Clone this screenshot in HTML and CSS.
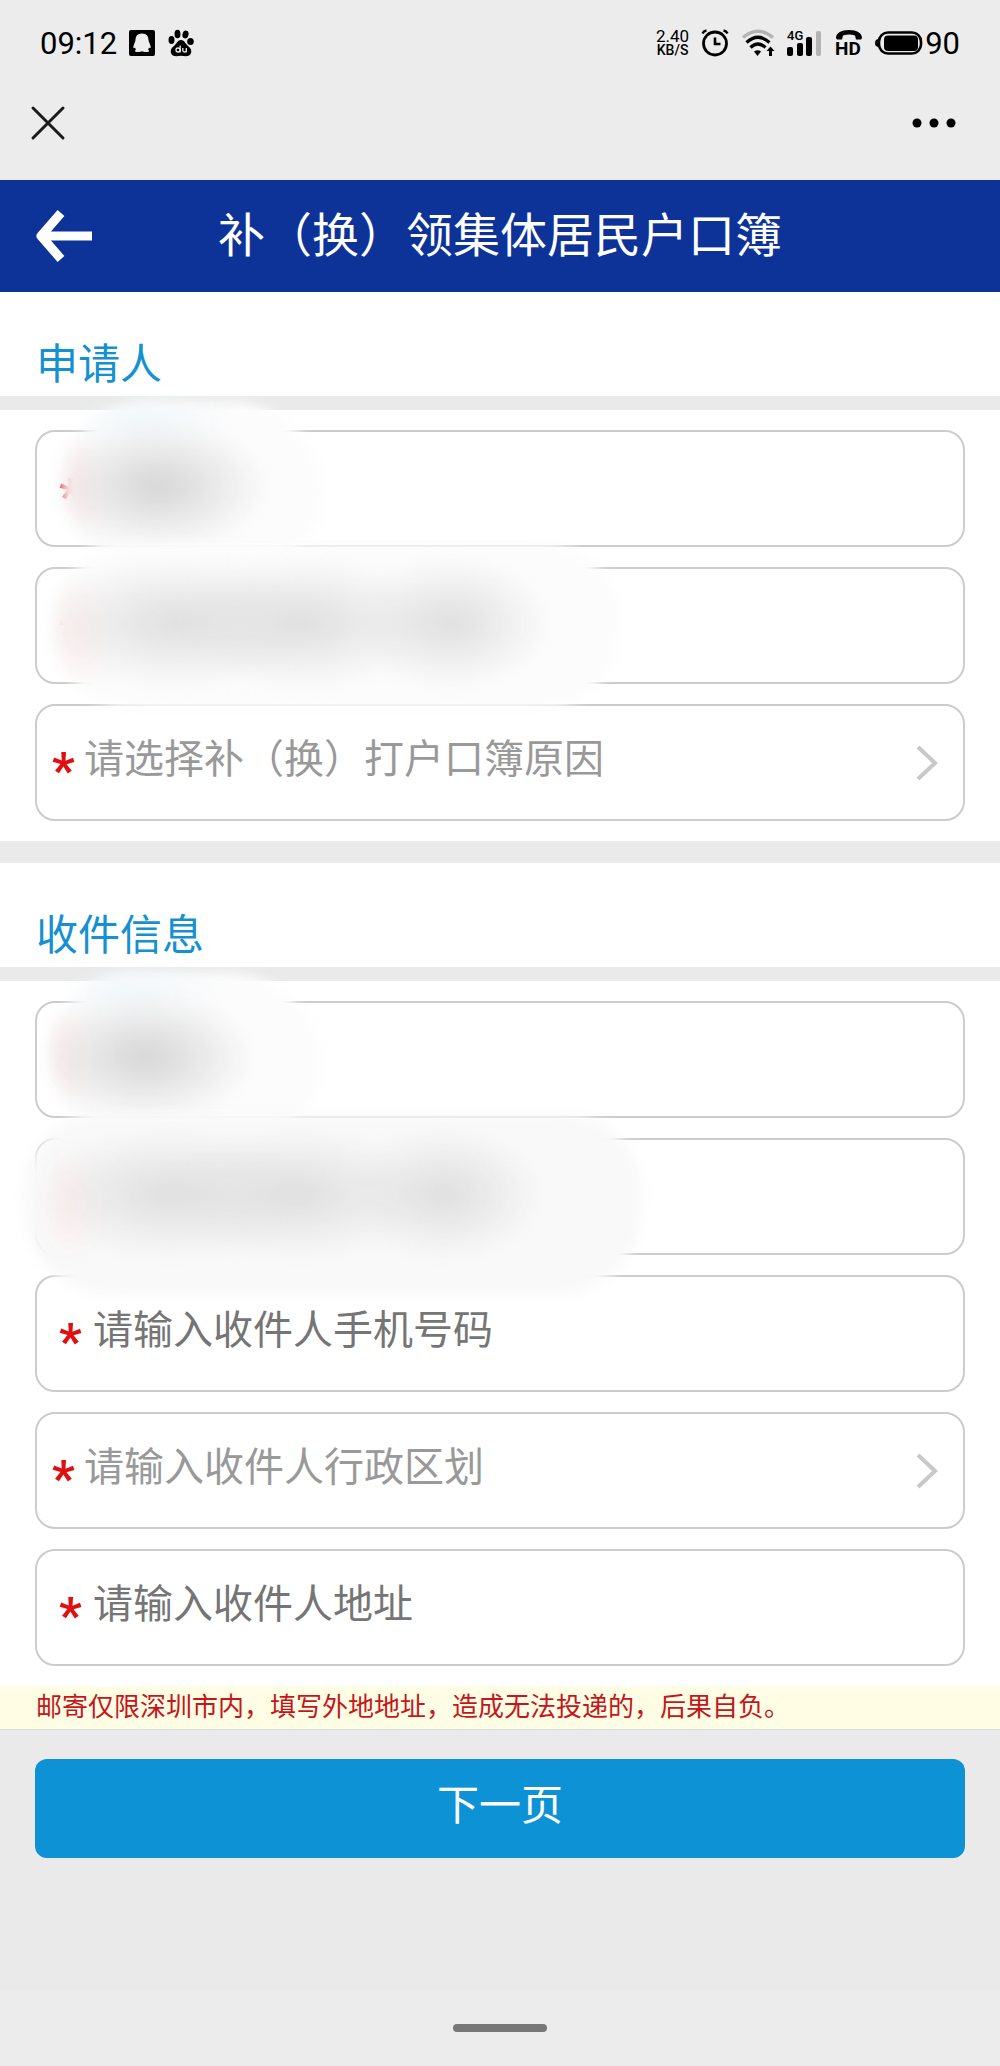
FILE: index.html
```html
<!DOCTYPE html>
<html lang="zh-CN">
<head>
  <meta charset="UTF-8">
  <meta name="viewport" content="width=device-width, initial-scale=1">
  <title>补（换）领集体居民户口簿</title>
  <link rel="stylesheet" href="styles.css">
</head>
<body>
  <div class="status-bar">
    <div class="status-left">
      <span class="status-time">09:12</span>
      <svg class="icon-qq" width="26" height="26" viewBox="0 0 26 26">
        <rect width="26" height="26" rx="2" fill="#000"/>
        <path d="M13 3.500c-4.500 0-6.500 2.800-6.500 6.500 0 2-2 4.500-2.200 7-.1 1.300.8 1.600 1.700.6l.8 1.900-1 1.800c0 1 5.700 1 7.200 0 1.500 1 7.200 1 7.200 0l-1-1.800.8-1.900c.9 1 1.800.7 1.700-.6C21.500 14.500 19.500 12 19.500 10c0-3.700-2-6.500-6.500-6.500z" fill="#eee"/>
      </svg>
      <svg class="icon-paw" width="28" height="28" viewBox="0 0 28 28">
        <ellipse cx="4.500" cy="11" rx="3" ry="4"/>
        <ellipse cx="10.500" cy="5" rx="3" ry="4.300"/>
        <ellipse cx="18.500" cy="5.500" rx="3" ry="4" transform="rotate(15 18.500 5.500)"/>
        <ellipse cx="23.500" cy="12.500" rx="3.300" ry="3.500"/>
        <path d="M14 11c3 0 4 3 6.500 5.500 3 2.500 4.500 4.500 3.500 7.500-1 3.500-4.500 3.500-10 2.800-5.500.7-9 .7-10-2.800-1-3 .5-5 3.500-7.500C10 14 11 11 14 11z"/>
        <g fill="none" stroke="#eee" stroke-width="1.300"><circle cx="11" cy="21" r="2"/><path d="M13.200 16.500V23.500M15.800 19v2.500c0 2 3.500 2 3.500 0v-2.500 4.500"/></g>
      </svg>
    </div>
    <div class="status-right">
      <div class="speed"><span>2.40</span><b>KB/S</b></div>
      <svg class="icon-alarm" width="28" height="28" viewBox="0 0 28 28" fill="none" stroke="#000">
        <circle cx="14" cy="14.500" r="11.500" stroke-width="2.800"/>
        <path d="M14 8.500v6.500h5.500" stroke-width="2.600"/>
        <path d="M1.500 4.500Q2.500 2 5.500 1.500M26.500 4.500Q25.500 2 22.500 1.500" stroke-width="2.400"/>
      </svg>
      <svg class="icon-wifi" width="34" height="28" viewBox="0 0 34 28" fill="none" stroke-width="3.200">
        <path d="M2 8.500Q17-4 32 8.500" stroke="#b3b3b3"/>
        <path d="M5.500 13.500Q17 3 28.500 13.500M9.500 18.500Q17 11.500 24.500 18.500" stroke="#000"/>
        <path d="M13 22.500Q17 20 20 22.500L16.500 27z" fill="#000"/>
        <path d="M28 27v-5h-2.500l4-4.500 4 4.500h-2.500v5z" fill="#000"/>
      </svg>
      <svg class="icon-signal" width="36" height="28" viewBox="0 0 36 28">
        <text x="0" y="11" class="signal-text">4G</text>
        <rect x="0" y="18" width="6" height="9" rx="2"/>
        <rect x="10" y="14" width="6" height="13" rx="2"/>
        <rect x="19" y="8" width="6" height="19" rx="2"/>
        <rect x="29" y="2" width="5" height="25" rx="2" fill="#b3b3b3"/>
      </svg>
      <svg class="icon-hd" width="28" height="28" viewBox="0 0 28 28">
        <path d="M1 9C1 4 6 1 14 1s13 3 13 8l-1 1.500h-5l-1-4q-6-2-12 0l-1 4H2z"/>
        <text x="0" y="26" class="hd-text">HD</text>
      </svg>
      <svg class="icon-battery" width="48" height="24" viewBox="0 0 48 24">
        <path d="M4 8Q0 8 0 12t4 4z"/>
        <rect x="4" y="1.500" width="42" height="21" rx="9" fill="none" stroke="#000" stroke-width="2.600"/>
        <rect x="9" y="4.500" width="34" height="15.500" rx="4"/>
      </svg>
      <span class="battery-level">90</span>
    </div>
  </div>

  <nav class="nav-bar">
    <button type="button" class="icon-button" aria-label="关闭">
      <svg width="32" height="32" viewBox="0 0 32 32" fill="none" stroke="#1a1a1a" stroke-width="3" stroke-linecap="round">
        <path d="M1 1l30 30M31 1L1 31"/>
      </svg>
    </button>
    <button type="button" class="icon-button" aria-label="更多">
      <svg width="44" height="32" viewBox="0 0 44 32">
        <circle cx="5" cy="16" r="4.500"/><circle cx="22" cy="16" r="4.500"/><circle cx="39" cy="16" r="4.500"/>
      </svg>
    </button>
  </nav>

  <header class="page-header">
    <button type="button" class="icon-button" aria-label="返回">
      <svg width="58" height="52" viewBox="0 0 58 52" fill="none" stroke="#fff" stroke-width="9">
        <path d="M26 3L6 26l20 23M5 26h52" stroke-linejoin="round"/>
      </svg>
    </button>
    <h1>补（换）领集体居民户口簿</h1>
  </header>

  <form>
    <section>
      <h2>申请人</h2>
      <div class="fields">
        <label class="field">
          <span class="required">*</span>
          <input type="text" aria-label="申请人姓名">
          <span class="smudge smudge-name"></span>
        </label>
        <label class="field">
          <span class="required">*</span>
          <input type="text" aria-label="申请人证件号码">
          <span class="smudge smudge-id"></span>
        </label>
        <label class="field field-select">
          <span class="required">*</span>
          <select aria-label="补（换）打户口簿原因">
            <option>请选择补（换）打户口簿原因</option>
          </select>
          <svg class="chevron" width="24" height="36" viewBox="0 0 24 36"><path d="M3 2l17 16L3 34"/></svg>
        </label>
      </div>
    </section>

    <section>
      <h2>收件信息</h2>
      <div class="fields">
        <label class="field">
          <span class="required">*</span>
          <input type="text" aria-label="收件人姓名">
          <span class="smudge smudge-name smudge-left"></span>
        </label>
        <label class="field">
          <span class="required">*</span>
          <input type="text" aria-label="收件人证件号码">
          <span class="smudge smudge-id smudge-wide"></span>
        </label>
        <label class="field">
          <span class="required">*</span>
          <input type="tel" placeholder="请输入收件人手机号码">
        </label>
        <label class="field field-select">
          <span class="required">*</span>
          <select aria-label="收件人行政区划">
            <option>请输入收件人行政区划</option>
          </select>
          <svg class="chevron" width="24" height="36" viewBox="0 0 24 36"><path d="M3 2l17 16L3 34"/></svg>
        </label>
        <label class="field">
          <span class="required">*</span>
          <input type="text" placeholder="请输入收件人地址">
        </label>
      </div>
    </section>

    <p class="notice">邮寄仅限深圳市内，填写外地地址，造成无法投递的，后果自负。</p>

    <div class="actions">
      <button type="submit" class="next">下一页</button>
    </div>
  </form>

  <footer class="home-bar"><span></span></footer>
</body>
</html>
```
FILE: styles.css
```css
* {
  box-sizing: border-box;
}
body {
  margin: 0;
  min-height: 100vh;
  display: flex;
  flex-direction: column;
  background: #ececec;
  font-family: Roboto, "Noto Sans CJK SC", sans-serif;
  color: #000;
}
h1, h2, p {
  margin: 0;
  font-weight: normal;
}
svg {
  display: block;
  overflow: visible;
}
button {
  font-family: inherit;
  border: none;
  cursor: pointer;
}
.icon-button {
  padding: 0;
  background: none;
}

/* phone status bar */
.status-bar {
  display: flex;
  justify-content: space-between;
  align-items: center;
  height: 86px;
  padding: 0 40px;
  font-size: 31px;
}
.status-left,
.status-right {
  display: flex;
  align-items: center;
}
.status-left {
  gap: 12px;
}
.status-right {
  gap: 12px;
}
.speed {
  display: flex;
  flex-direction: column;
  align-items: center;
  font-size: 17px;
  line-height: 14px;
}
.speed b {
  font-size: 14px;
  font-weight: 500;
}
.signal-text {
  font-size: 13px;
  font-weight: 500;
}
.hd-text {
  font-size: 19px;
  font-weight: 700;
}
.battery-level {
  margin-left: -10px;
}

.nav-bar {
  display: flex;
  justify-content: space-between;
  align-items: center;
  height: 94px;
  padding: 0 44px 20px 32px;
}

.page-header {
  display: grid;
  grid-template-columns: 1fr auto 1fr;
  align-items: center;
  height: 112px;
  padding: 0 35px;
  background: #0d3399;
  color: #fff;
}
.page-header h1 {
  font-size: 47px;
  line-height: 64px;
}

form {
  flex: 1;
  background: #eaeaea;
}
section {
  background: #fff;
}
section + section {
  margin-top: 22px;
}
h2 {
  padding: 42px 36px 0;
  border-bottom: 14px solid #eaeaea;
  font-size: 42px;
  line-height: 62px;
  color: #1590d2;
}
.fields {
  display: flex;
  flex-direction: column;
  gap: 20px;
  padding: 20px 35px;
}
.field {
  position: relative;
  display: flex;
  align-items: center;
  gap: 10px;
  height: 117px;
  padding: 0 22px;
  border: 2px solid #ccc;
  border-radius: 20px;
}
.field-select {
  gap: 8px;
  padding: 0 24px 0 15px;
}
.required {
  width: 24px;
  padding-top: 16px;
  font-size: 50px;
  font-weight: 700;
  line-height: 50px;
  color: #e01010;
}
.field input,
.field select {
  flex: 1;
  min-width: 0;
  height: 100%;
  padding: 0 0 6px;
  border: none;
  outline: none;
  background: none;
  font-family: inherit;
  font-size: 40px;
}
.field input::placeholder {
  color: #757575;
}
.field select {
  appearance: none;
  color: #999;
}
.chevron path {
  fill: none;
  stroke: #c8c8c8;
  stroke-width: 4;
}

/* personal data is smeared out */
.smudge {
  position: absolute;
  z-index: 1;
  pointer-events: none;
}
.smudge::before,
.smudge::after {
  content: "";
  position: absolute;
  inset: 0;
}
.smudge::before {
  background: #fcfcfc;
  filter: blur(6px);
}
.smudge::after {
  filter: blur(8px);
}
.smudge-name {
  top: -30px;
  left: 27px;
  width: 260px;
  height: 150px;
}
.smudge-name::before {
  border-radius: 110px 120px 70px 70px;
}
.smudge-name::after {
  border-radius: 70px;
  background:
    radial-gradient(ellipse 110px 66px at 94px 84px, #d6d6d6, #e4e4e4 40%, transparent),
    radial-gradient(ellipse 36px 54px at 14px 86px, #fce6e6, transparent),
    radial-gradient(ellipse 90px 30px at 80px 16px, #f0f7fb, transparent);
}
.smudge-left {
  left: 14px;
  width: 270px;
}
.smudge-id {
  top: -26px;
  left: 17px;
  width: 566px;
  height: 166px;
}
.smudge-id::before {
  border-radius: 80px;
}
.smudge-id::after {
  border-radius: 80px;
  background:
    radial-gradient(ellipse 140px 66px at 124px 80px, #dedede, transparent),
    radial-gradient(ellipse 130px 66px at 250px 80px, #dedede, transparent),
    radial-gradient(ellipse 100px 66px at 396px 80px, #dedede, transparent),
    radial-gradient(ellipse 40px 60px at 22px 90px, #fdeeee, transparent);
}
.smudge-wide {
  left: -14px;
  width: 620px;
  height: 182px;
}
.smudge-wide::before {
  background: #f9f9f9;
  border-radius: 80px 80px 90px 90px;
}
.smudge-wide::after {
  left: 24px;
}

.notice {
  padding: 0 36px;
  border-bottom: 1px solid #ddd;
  background: #fffde3;
  font-size: 26px;
  line-height: 43px;
  color: #c4161c;
}
.actions {
  padding: 29px 35px;
}
.next {
  display: block;
  width: 100%;
  height: 99px;
  padding: 0 0 14px;
  border-radius: 12px;
  background: #0e92d6;
  font-size: 42px;
  color: #fff;
}

.home-bar {
  display: flex;
  justify-content: center;
  padding: 34px 0;
}
.home-bar span {
  width: 94px;
  height: 8px;
  border-radius: 4px;
  background: #777;
}
```
